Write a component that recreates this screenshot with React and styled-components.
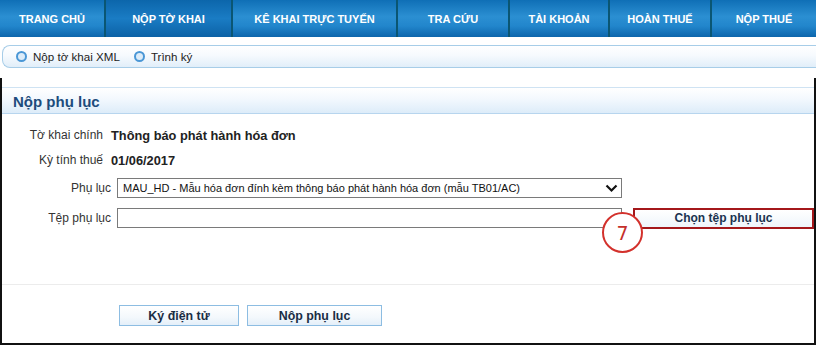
import React from "react";
import styled, { createGlobalStyle } from "styled-components";

const GlobalStyle = createGlobalStyle`
  html, body { margin: 0; padding: 0; background: #fff; }
  body { font-family: "Liberation Sans", Arial, sans-serif; font-size: 12px; color: #333; }
  * { box-sizing: border-box; }
`;

const Page = styled.div`
  width: 816px;
  height: 345px;
  overflow: hidden;
  display: flex;
  flex-direction: column;
  background: #fff;
`;

const NavBar = styled.nav`
  display: flex;
  flex: none;
  height: 37px;
  background: linear-gradient(180deg, #0f6fb6 0%, #2b8fd2 45%, #2286cc 70%, #0d66ac 100%);
`;

const NavItem = styled.div`
  flex: none;
  width: ${(p) => p.$w}px;
  display: flex;
  align-items: center;
  justify-content: center;
  color: #fff;
  font-weight: bold;
  font-size: 11px;
  text-transform: uppercase;
  border-right: ${(p) => (p.$last ? "none" : "2px solid #0a5673")};
  background: ${(p) => (p.$active ? "linear-gradient(180deg, #0c66ab 0%, #1a7cc4 50%, #0c62a6 100%)" : "transparent")};
`;

const SubBar = styled.div`
  flex: none;
  margin: 8px 0 0 2px;
  height: 23px;
  border: 1px solid #a7cde8;
  border-right: none;
  border-radius: 8px 0 0 8px;
  background: linear-gradient(180deg, #ffffff 0%, #f6fafe 45%, #e1eef9 100%);
  display: flex;
  align-items: center;
  padding-left: 13px;
  gap: 14px;
`;

const SubItem = styled.span`
  display: inline-flex;
  align-items: center;
  gap: 6px;
  color: #222;
  font-size: 11.6px;
  &::before {
    content: "";
    width: 7px;
    height: 7px;
    border-radius: 50%;
    border: 2px solid #4a97d6;
    background: #dcecf9;
  }
`;

const Frame = styled.div`
  position: relative;
  flex: 1;
  margin-top: 10px;
  border-left: 2px solid #111;
  border-right: 2px solid #111;
  border-bottom: 2px solid #111;
  display: flex;
  flex-direction: column;
`;

const Heading = styled.div`
  margin-top: 9px;
  height: 27px;
  border-top: 1px solid #cfe3f3;
  border-bottom: 1px solid #b7d5ee;
  background: linear-gradient(180deg, #ffffff 0%, #f4f9fe 40%, #ddecf9 100%);
  display: flex;
  align-items: center;
  padding: 2px 0 0 11px;
  font-size: 15px;
  font-weight: bold;
  color: #1d4c7c;
`;

const Form = styled.div`
  display: flex;
  flex-direction: column;
  padding-top: 11px;
`;

const Row = styled.div`
  display: flex;
  align-items: center;
  height: 20px;
  margin-top: ${(p) => p.$mt || 0}px;
`;

const Label = styled.div`
  flex: none;
  width: ${(p) => p.$w || 101}px;
  text-align: right;
  color: #333;
  font-size: 12px;
`;

const Value = styled.div`
  margin-left: 8px;
  font-weight: bold;
  color: #222;
  font-size: 12.8px;
`;

const Field = styled.div`
  margin-left: 6px;
  width: 505px;
  height: 20px;
  border: 1px solid #7a7a7a;
  background: #fff;
  display: flex;
  align-items: center;
  justify-content: space-between;
  padding: 0 3px 0 5px;
  color: #111;
  font-size: 11px;
`;

const PickButton = styled.div`
  margin-left: 11px;
  width: 181px;
  height: 21px;
  border: 2px solid #a4181b;
  background: linear-gradient(180deg, #ffffff 0%, #eef5fb 100%);
  display: flex;
  align-items: center;
  justify-content: center;
  font-weight: bold;
  font-size: 12px;
  color: #1b3350;
`;

const Callout = styled.div`
  position: absolute;
  left: 600px;
  top: 134px;
  width: 41px;
  height: 41px;
  border-radius: 50%;
  border: 2px solid #d3312c;
  background: #fff;
  display: flex;
  align-items: center;
  justify-content: center;
  color: #c5302b;
  font-size: 19px;
  font-family: "DejaVu Sans", sans-serif;
`;

const Divider = styled.div`
  margin-top: 56px;
  height: 1px;
  background: #ececec;
`;

const Actions = styled.div`
  display: flex;
  gap: 8px;
  padding-left: 117px;
  margin-top: 20px;
`;

const ActionButton = styled.div`
  width: ${(p) => p.$w}px;
  height: 21px;
  border: 1px solid #8dbde2;
  background: linear-gradient(180deg, #ffffff 0%, #f3f8fc 60%, #e4eff9 100%);
  display: flex;
  align-items: center;
  justify-content: center;
  font-weight: bold;
  font-size: 12.4px;
  color: #1b2d45;
`;

const Chevron = () => (
  <svg width="13" height="9" viewBox="0 0 13 9">
    <polyline points="1.5,1.5 6.5,6.5 11.5,1.5" fill="none" stroke="#111" strokeWidth="2.2" />
  </svg>
);

const navItems = [
  { t: "Trang chủ", w: 106 },
  { t: "Nộp tờ khai", w: 127, active: true },
  { t: "Kê khai trực tuyến", w: 165 },
  { t: "Tra cứu", w: 112 },
  { t: "Tài khoản", w: 100 },
  { t: "Hoàn thuế", w: 102 },
  { t: "Nộp thuế", w: 104, last: true },
];

export default function App() {
  return (
    <Page>
      <GlobalStyle />
      <NavBar>
        {navItems.map((n) => (
          <NavItem key={n.t} $w={n.w} $active={n.active} $last={n.last}>
            {n.t}
          </NavItem>
        ))}
      </NavBar>
      <SubBar>
        <SubItem>Nộp tờ khai XML</SubItem>
        <SubItem>Trình ký</SubItem>
      </SubBar>
      <Frame>
        <Heading>Nộp phụ lục</Heading>
        <Form>
          <Row>
            <Label>Tờ khai chính</Label>
            <Value>Thông báo phát hành hóa đơn</Value>
          </Row>
          <Row $mt={5}>
            <Label>Kỳ tính thuế</Label>
            <Value>01/06/2017</Value>
          </Row>
          <Row $mt={8}>
            <Label $w={109}>Phụ lục</Label>
            <Field>
              <span>MAU_HD - Mẫu hóa đơn đính kèm thông báo phát hành hóa đơn (mẫu TB01/AC)</span>
              <Chevron />
            </Field>
          </Row>
          <Row $mt={10}>
            <Label $w={109}>Tệp phụ lục</Label>
            <Field />
            <PickButton>Chọn tệp phụ lục</PickButton>
          </Row>
        </Form>
        <Callout>7</Callout>
        <Divider />
        <Actions>
          <ActionButton $w={120}>Ký điện tử</ActionButton>
          <ActionButton $w={135}>Nộp phụ lục</ActionButton>
        </Actions>
      </Frame>
    </Page>
  );
}
